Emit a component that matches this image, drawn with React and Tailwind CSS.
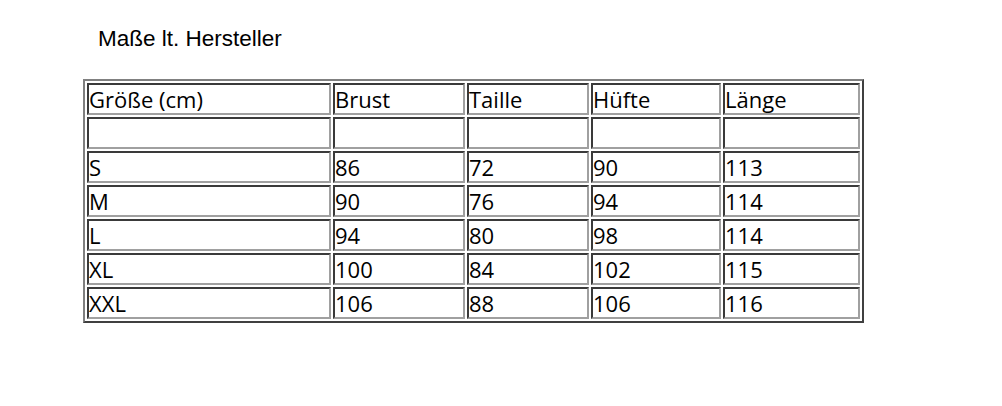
import React from 'react';

const header = ['Größe (cm)', 'Brust', 'Taille', 'Hüfte', 'Länge'];

const rows = [
  ['', '', '', '', ''],
  ['S', '86', '72', '90', '113'],
  ['M', '90', '76', '94', '114'],
  ['L', '94', '80', '98', '114'],
  ['XL', '100', '84', '102', '115'],
  ['XXL', '106', '88', '106', '116'],
];

const widths = ['w-[244px]', 'w-[132px]', 'w-[122px]', 'w-[130px]', 'w-[137px]'];

const cellClass =
  'h-[32px] p-0 align-middle text-left border-2 border-solid border-t-[#3a3a3a] border-l-[#3a3a3a] border-b-[#a0a0a0] border-r-[#a0a0a0] leading-none';

export default function App() {
  return (
    <div className="w-[1002px] h-[406px] bg-white text-black">
      <div className="pt-[26px] pl-[98px] font-['Liberation_Sans',Arial,sans-serif] text-[22.5px] leading-[26px]">
        Maße lt. Hersteller
      </div>
      <div className="pl-[83px] pt-[27px]">
        <table className="border-separate border-spacing-[2px] border-2 border-solid border-t-[#808080] border-l-[#808080] border-b-[#404040] border-r-[#404040] font-['Open_Sans',sans-serif] text-[22px] table-fixed">
          <tbody>
            <tr>
              {header.map((h, i) => (
                <td key={i} className={`${cellClass} ${widths[i]}`}>
                  {h}
                </td>
              ))}
            </tr>
            {rows.map((r, ri) => (
              <tr key={ri}>
                {r.map((c, ci) => (
                  <td key={ci} className={cellClass}>
                    {c}
                  </td>
                ))}
              </tr>
            ))}
          </tbody>
        </table>
      </div>
    </div>
  );
}
